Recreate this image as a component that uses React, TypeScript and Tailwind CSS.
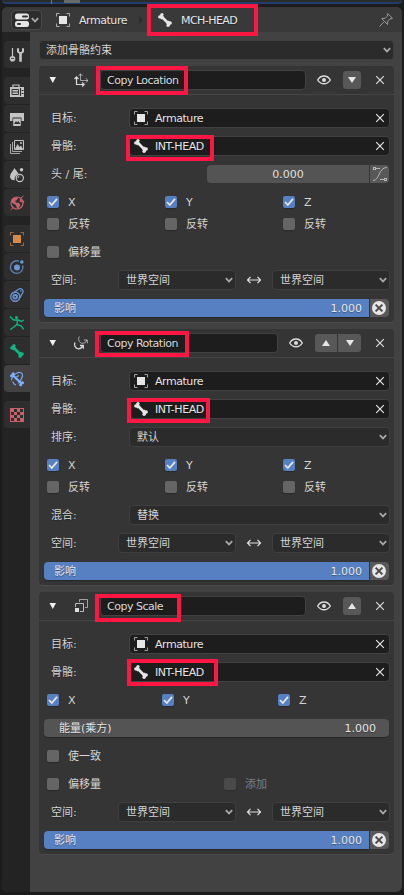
import { useState } from "react";
import type { ReactNode } from "react";
import clsx from "clsx";

const svgProps = {
  width: 16,
  height: 16,
  viewBox: "0 0 16 16",
  fill: "none",
  stroke: "currentColor",
  className: "shrink-0",
};

const ObjectIcon = () => (
  <svg {...svgProps}>
    <path d="M1.5 4.5v-3h3M11.5 1.5h3v3M14.5 11.5v3h-3M4.5 14.5h-3v-3" opacity="0.65" />
    <rect x="4" y="4" width="8" height="8" fill="currentColor" stroke="none" />
  </svg>
);

const BoneIcon = () => (
  <svg {...svgProps}>
    <path d="M4.5 4.5l7 7" strokeWidth="2.6" />
    <g fill="currentColor" stroke="none">
      <circle cx="5" cy="2.6" r="1.6" />
      <circle cx="2.8" cy="4.9" r="1.7" />
      <circle cx="13.2" cy="11" r="1.7" />
      <circle cx="11.1" cy="13.3" r="1.7" />
      <path d="M4 2l3 3-2.5 2.5L2 5zM12 14l-3-3 2.5-2.5L14 11z" />
    </g>
  </svg>
);

const ToolIcon = () => (
  <svg {...svgProps}>
    <path d="M3.5 1v8" strokeWidth="1.2" />
    <circle cx="3.5" cy="11.8" r="2.8" fill="currentColor" stroke="none" />
    <path d="M2 11.5h3" stroke="#2f2f2f" strokeWidth="0.8" />
    <path d="M9 1.3v3.2L11.5 6.5 14 4.5V1.3" strokeWidth="2" />
    <path d="M11.5 6v8.7" strokeWidth="2.6" />
  </svg>
);

const RenderIcon = () => (
  <svg {...svgProps}>
    <path d="M4 4V2h6v2" strokeWidth="1.2" />
    <path fill="currentColor" stroke="none" d="M1 4h14v10H1z" />
    <path d="M3 6.5h6.5v5H3zM3 9h6.5" stroke="#303030" />
    <path d="M11.5 5v8M12.5 7.5h2M12.5 10.500h2" stroke="#303030" />
  </svg>
);

const OutputIcon = () => (
  <svg {...svgProps}>
    <path fill="currentColor" stroke="none" d="M1 2h14v3H1zM1 5h14v5h-2.5V6.5h-9V10H1z" />
    <path fill="currentColor" stroke="none" d="M4.2 7.5h7.6V15H4.2z" />
    <path fill="#303030" stroke="none" d="M5 13l2-3 1.2 1.5L9.5 10l1.8 3z" />
  </svg>
);

const ViewLayerIcon = () => (
  <svg {...svgProps}>
    <path d="M1.5 5v9.5H11M3.5 3v9.5H13" opacity="0.8" />
    <path d="M5.5 1.5h9v9h-9z" />
    <path d="M6 10l2.500-5 2 3 1.500-1.500L14 10z" fill="currentColor" stroke="none" />
    <circle cx="12" cy="4" r="1" fill="currentColor" stroke="none" />
  </svg>
);

const SceneIcon = () => (
  <svg {...svgProps}>
    <path
      d="M5.5 1C4 4 1 6.5 1 9.5 1 12 3 13.5 5.500 13.300 5.500 10 7 7.500 9.500 7 8.500 4.500 6.500 3 5.500 1z"
      fill="currentColor"
      stroke="none"
    />
    <circle cx="12.5" cy="2.8" r="1.8" fill="currentColor" stroke="none" />
    <circle cx="10.8" cy="11" r="3.6" strokeWidth="1.2" />
    <path d="M9 11a2 2 0 0 1 1.5-2" />
  </svg>
);

const WorldIcon = () => (
  <svg {...svgProps}>
    <circle cx="8" cy="8" r="6" strokeWidth="1.2" />
    <path d="M12 3l2.5-2M4 13l-2.5 2M14 8.5l.8-3" />
    <path
      d="M3 4l4-2 2 1-1 2-2 1 1 1.5 3 .5 1.5 2-2 3-1.5.5L7 10 4 8.5 2.5 7zM11 3.5l2 2-.5 2-2-1z"
      fill="currentColor"
      stroke="none"
    />
  </svg>
);

const PhysicsIcon = () => (
  <svg {...svgProps}>
    <path d="M10 2.2A6.3 6.3 0 1 0 13.8 6.5" strokeWidth="1.3" opacity="0.8" />
    <circle cx="8" cy="8.5" r="3" fill="currentColor" stroke="none" />
    <circle cx="12.8" cy="3" r="1.8" fill="currentColor" stroke="none" />
  </svg>
);

const ConstraintIcon = () => (
  <svg {...svgProps}>
    <circle cx="6.2" cy="9.8" r="4.5" strokeWidth="1.4" />
    <circle cx="6.2" cy="9.8" r="1.8" strokeWidth="1.8" />
    <path d="M2.5 7L10 2c2-1 4.500.5 4 3.200L10.200 12" strokeWidth="1.3" />
    <circle cx="11.8" cy="4" r=".8" fill="currentColor" stroke="none" />
  </svg>
);

const ArmatureDataIcon = () => (
  <svg {...svgProps}>
    <circle cx="7.5" cy="2.5" r="1.5" fill="currentColor" stroke="none" />
    <path
      d="M1 1.5L4.5 5h5l3 1.5L14.8 5M8.5 5l-.5 4.5 4.5 1.5 2 3.5M7.8 9.5L5 12l-3.800 2.500"
      strokeWidth="1.4"
    />
  </svg>
);

const BoneConstraintIcon = () => (
  <svg {...svgProps}>
    <path
      d="M2.500 9.500c0-3 2-5.500 5.500-7.500 3-1.500 6 0 5.500 3-.5 2-2 5-4 7.500M4 10.500a4 4 0 0 0 3 3.500M6.500 6.500L10 4.500"
      strokeWidth="1.2"
      opacity="0.85"
    />
    <path d="M4 4.500l9 8.500" strokeWidth="2.2" />
    <g fill="currentColor" stroke="none">
      <circle cx="4.2" cy="2.8" r="1.5" />
      <circle cx="2.5" cy="4.8" r="1.5" />
      <circle cx="13.5" cy="11.8" r="1.5" />
      <circle cx="11.7" cy="13.8" r="1.5" />
    </g>
  </svg>
);

const TextureIcon = () => (
  <svg {...svgProps}>
    <rect x="1.5" y="1.5" width="13" height="13" />
    <path
      fill="currentColor"
      stroke="none"
      d="M2 2h3v3H2zM8 2h3v3H8zM5 5h3v3H5zM11 5h3v3h-3zM2 8h3v3H2zM8 8h3v3H8zM5 11h3v3H5zM11 11h3v3h-3z"
    />
  </svg>
);

const LocationIcon = () => (
  <svg {...svgProps}>
    <path d="M3.5 5v7.500H11M1.500 7l2-2.200 2 2.200M9 10.300l2.200 2.200L9 14.500" strokeWidth="1.2" />
    <path d="M7.500 2v6.500H15M5.500 4l2-2.300 2 2.300M12.700 6.300L15 8.500l-2.300 2.200" opacity="0.65" />
  </svg>
);

const RotationIcon = () => (
  <svg {...svgProps}>
    <path d="M2 7.500C.8 10 2 13 4.500 13.700c2.500.5 4.500-1 5.500-3.200M7 10.500h3.300v3.300" strokeWidth="1.3" />
    <path d="M6.300 1.500C4.800 4 6 7.200 8.500 8.200 11 8.700 13 7.500 14 5M10.800 5h3.500v3.300" opacity="0.7" />
  </svg>
);

const ScaleIcon = () => (
  <svg {...svgProps}>
    <path d="M6.500 4V1.500h8v8H12" opacity="0.65" />
    <path d="M2.500 9V5.500h8v8H7" opacity="0.8" />
    <rect x="2" y="10" width="4" height="4" fill="currentColor" stroke="none" />
  </svg>
);

const EyeIcon = () => (
  <svg {...svgProps}>
    <path
      d="M1.700 8C3.200 5.300 5.500 4 8 4s4.800 1.300 6.300 4C12.800 10.500 10.500 11.800 8 11.800S3.200 10.500 1.700 8z"
      strokeWidth="1.4"
    />
    <circle cx="8" cy="7.9" r="2" fill="currentColor" stroke="none" />
  </svg>
);

const CloseIcon = () => (
  <svg {...svgProps}>
    <path d="M4.200 4.200l7.600 7.600M11.800 4.200l-7.600 7.600" strokeWidth="1.2" />
  </svg>
);

const Chevron = () => (
  <svg width="8" height="6" viewBox="0 0 8 6" fill="none" stroke="#a8a8a8" className="shrink-0">
    <path d="M.8 1.200L4 4.400l3.200-3.200" strokeWidth="1.8" />
  </svg>
);

const Triangle = ({ up = false }: { up?: boolean }) => (
  <svg width="8" height="8" viewBox="0 0 8 8" fill="#e6e6e6" className="shrink-0">
    <path d={up ? "M4 1l4 6H0z" : "M0 1h8L4 7z"} />
  </svg>
);

const SwapIcon = () => (
  <svg {...svgProps}>
    <path d="M1.500 8h13M4.500 4.800L1.500 8l3 3.200M11.500 4.800l3 3.200-3 3.200" strokeWidth="1.2" />
  </svg>
);

const PinIcon = () => (
  <svg {...svgProps}>
    <path d="M9.700 1.500l4.800 4.800-1.500.7-1-.3L9.800 9l-.3 3.500L3.700 6.500 7.200 6.200 9.500 4l-.3-1.200zM6.300 9.500L1.500 14.500" />
  </svg>
);

const CurveIcon = () => (
  <svg {...svgProps}>
    <path d="M1 14.500c7 0 5-13 14-13M4 2.500h4M8 13.500h4" />
    <rect x="1.5" y="1.5" width="2" height="2" />
    <rect x="12.5" y="12.5" width="2" height="2" />
  </svg>
);

const EditorIcon = () => (
  <svg {...svgProps} className="shrink-0 text-[#e6e6e6]">
    <rect x="1" y="1.500" width="14" height="6" rx="2.5" fill="currentColor" stroke="none" />
    <rect x="1" y="9" width="14" height="6" rx="2.5" fill="currentColor" stroke="none" />
    <path d="M9 4.500h4M4 12h2" stroke="#333" strokeWidth="2" strokeLinecap="round" />
  </svg>
);

const tabGroups = [
  [{ id: "tool", icon: <ToolIcon />, color: "text-[#c4c4c4]" }],
  [
    { id: "render", icon: <RenderIcon />, color: "text-[#c4c4c4]" },
    { id: "output", icon: <OutputIcon />, color: "text-[#c4c4c4]" },
    { id: "viewLayer", icon: <ViewLayerIcon />, color: "text-[#c4c4c4]" },
    { id: "scene", icon: <SceneIcon />, color: "text-[#c4c4c4]" },
    { id: "world", icon: <WorldIcon />, color: "text-[#c7616b]" },
  ],
  [
    { id: "object", icon: <ObjectIcon />, color: "text-[#d58a4b]" },
    { id: "physics", icon: <PhysicsIcon />, color: "text-[#6b96d6]" },
    { id: "constraint", icon: <ConstraintIcon />, color: "text-[#6b96d6]" },
    { id: "data", icon: <ArmatureDataIcon />, color: "text-[#10b582]" },
    { id: "bone", icon: <BoneIcon />, color: "text-[#10b582]" },
    { id: "boneConstraint", icon: <BoneConstraintIcon />, color: "text-[#82b3ff]" },
  ],
  [{ id: "texture", icon: <TextureIcon />, color: "text-[#c7616b]" }],
];

// Red callout frames drawn over the editor
const callouts = [
  "left-[147px] top-[4px] w-[111px] h-[32px]",
  "left-[96px] top-[66px] w-[92px] h-[29px]",
  "left-[126px] top-[135px] w-[88px] h-[26px]",
  "left-[95px] top-[331px] w-[94px] h-[26px]",
  "left-[127px] top-[398px] w-[83px] h-[25px]",
  "left-[95px] top-[594px] w-[86px] h-[28px]",
  "left-[127px] top-[659px] w-[91px] h-[27px]",
];

function Text({ className, children }: { className?: string; children: ReactNode }) {
  return <span className={clsx("pt-[2px]", className)}>{children}</span>;
}

function Row({ label, children }: { label?: string; children: ReactNode }) {
  return (
    <div className="flex h-5 items-center">
      {label && <Text className="w-[79px] shrink-0 pl-2">{label}</Text>}
      {children}
    </div>
  );
}

function Select({ value, className }: { value: string; className?: string }) {
  return (
    <button
      className={clsx(
        "flex h-5 items-center justify-between rounded-[4px] border border-[#3f3f3f] bg-[#2b2b2b] pr-[2px]",
        className
      )}
    >
      <Text>{value}</Text>
      <Chevron />
    </button>
  );
}

function DataField({ icon, value }: { icon: ReactNode; value: string }) {
  return (
    <div className="ml-[7px] flex h-5 flex-1 items-center rounded-[4px] border border-[#424242] bg-[#1d1d1d] pr-[1px] pl-[3px] text-[#e6e6e6]">
      {icon}
      <Text className="ml-[6px] flex-1 tracking-[-0.45px]">{value}</Text>
      <CloseIcon />
    </div>
  );
}

function Checkbox({
  label,
  defaultChecked = false,
  disabled = false,
  className,
}: {
  label: string;
  defaultChecked?: boolean;
  disabled?: boolean;
  className?: string;
}) {
  const [checked, setChecked] = useState(defaultChecked);
  return (
    <button
      onClick={() => !disabled && setChecked(!checked)}
      className={clsx("flex items-center gap-[9px]", disabled && "opacity-45", className)}
    >
      <span
        className={clsx(
          "flex h-3 w-3 items-center justify-center rounded-[2px] shadow-[0_1px_1px_rgba(0,0,0,0.25)]",
          checked ? "bg-[#5680c2]" : "bg-[#656565]"
        )}
      >
        {checked && (
          <svg width="10" height="10" viewBox="0 0 10 10" fill="none" stroke="#e6e6e6">
            <path d="M1 5l2.800 3L9 1.800" strokeWidth="1.8" />
          </svg>
        )}
      </span>
      <Text>{label}</Text>
    </button>
  );
}

function Axes({ compact = false }: { compact?: boolean }) {
  return (
    <div className="flex h-5 items-center pl-[4px]">
      <Checkbox label="X" defaultChecked className={compact ? "w-[115px]" : "w-[118px]"} />
      <Checkbox label="Y" defaultChecked className={compact ? "w-[116px]" : "w-[118px]"} />
      <Checkbox label="Z" defaultChecked />
    </div>
  );
}

function InvertRow() {
  return (
    <div className="-mt-[6px] flex h-5 items-center pl-[4px]">
      <Checkbox label="反转" className="w-[118px]" />
      <Checkbox label="反转" className="w-[118px]" />
      <Checkbox label="反转" />
    </div>
  );
}

function SpaceRow() {
  return (
    <div className="flex h-5 items-center">
      <Text className="w-[75px] pl-2">空间:</Text>
      <Select value="世界空间" className="w-[118px] pl-[7px]" />
      <span className="flex w-[36px] justify-center text-[#e0e0e0]">
        <SwapIcon />
      </span>
      <Select value="世界空间" className="flex-1 pl-[7px]" />
    </div>
  );
}

function Influence() {
  return (
    <div className="flex h-5 items-center gap-px pr-[1px] pl-[1px]">
      <div className="flex h-[18px] flex-1 items-center justify-between rounded-l-[4px] bg-[#5680c2] pr-[7px] pl-[10px] text-[#e6e6e6] shadow-[0_1px_1px_rgba(0,0,0,0.3)]">
        <Text>影响</Text>
        <Text>1.000</Text>
      </div>
      <button className="flex h-[18px] w-[19px] items-center justify-start rounded-r-[4px] bg-[#585858] pl-[2px]">
        <svg width="14" height="14" viewBox="0 0 14 14">
          <circle cx="7" cy="7" r="7" fill="#e6e6e6" />
          <path d="M3.600 3.600l6.800 6.800M10.400 3.600l-6.800 6.800" stroke="#4a4a4a" strokeWidth="2" />
        </svg>
      </button>
    </div>
  );
}

function Panel({
  icon,
  title,
  up = false,
  down = false,
  children,
}: {
  icon: ReactNode;
  title: string;
  up?: boolean;
  down?: boolean;
  children: ReactNode;
}) {
  const [open, setOpen] = useState(true);
  return (
    <section className="rounded-[4px] bg-[#353535] pb-[4px] shadow-[0_1px_0_#4a4a4a]">
      <div className="flex h-[29px] items-center border-b border-[#454545] pr-[6px] text-[#dcdcdc]">
        <button onClick={() => setOpen(!open)} className="ml-[9px]">
          <svg width="9" height="8" viewBox="0 0 9 8" fill="#f0f0f0">
            <path d="M1.500 1h6.500L4.750 7z" />
          </svg>
        </button>
        <span className="ml-[16px]">{icon}</span>
        <div className="ml-[11px] flex h-5 flex-1 items-center rounded-[4px] border border-[#424242] bg-[#1d1d1d] pl-[6px] tracking-[-0.5px]">
          <Text>{title}</Text>
        </div>
        <button className="ml-[10px]">
          <EyeIcon />
        </button>
        <div className="mr-[11px] ml-[11px] flex gap-px overflow-hidden rounded-[3px]">
          {up && (
            <button
              className={clsx("flex h-[18px] items-center justify-center bg-[#585858]", down ? "w-[22px]" : "w-[18px]")}
            >
              <Triangle up />
            </button>
          )}
          {down && (
            <button
              className={clsx("flex h-[18px] items-center justify-center bg-[#585858]", up ? "w-[23px]" : "w-[18px]")}
            >
              <Triangle />
            </button>
          )}
        </div>
        <button>
          <CloseIcon />
        </button>
      </div>
      {open && <div className="flex flex-col gap-2 px-[4px] pt-[13px]">{children}</div>}
    </section>
  );
}

export default function App() {
  const [activeTab, setActiveTab] = useState("boneConstraint");

  return (
    <div className="relative flex h-[895px] w-[404px] flex-col overflow-hidden bg-[#1c1c1c] font-['DejaVu_Sans','Noto_Sans_CJK_SC',sans-serif] text-[11px] leading-[14px] text-[#d4d4d4] [text-shadow:0_1px_1px_rgba(0,0,0,0.35)]">
      {/* Bottom edge of the editor above */}
      <div className="mx-[2px] mb-[3px] flex h-[4px] shrink-0 gap-3 rounded-b-[4px] border-b-2 border-[#213d6b] bg-[#2b2b2b] pl-[49px]">
        <span className="h-[4px] w-px bg-[#777]" />
        <span className="h-[3px] w-[16px] bg-[#6a6a6a]" />
      </div>

      <div className="mx-[2px] mb-[3px] flex flex-1 flex-col overflow-hidden rounded-[6px] bg-[#424242]">
        <header className="flex h-[25px] shrink-0 items-center bg-[#393939] pr-[8px] pl-[9px] text-[#e6e6e6]">
          <button className="flex h-[20px] w-[31px] items-center gap-[1px] rounded-[4px] border border-[#4a4a4a] bg-[#2d2d2d] pl-[2px]">
            <EditorIcon />
            <Chevron />
          </button>
          <span className="ml-[13px]">
            <ObjectIcon />
          </span>
          <Text className="ml-[8px] w-[60px] tracking-[-0.45px]">Armature</Text>
          <svg width="5" height="8" viewBox="0 0 5 8" fill="#2c2c2c">
            <path d="M0 0l4 4-4 4z" />
          </svg>
          <span className="ml-[13px]">
            <BoneIcon />
          </span>
          <Text className="ml-[8px] flex-1 tracking-[-0.55px]">MCH-HEAD</Text>
          <span className="text-[#9a9a9a]">
            <PinIcon />
          </span>
        </header>

        <div className="flex flex-1">
          <nav className="flex w-7 shrink-0 flex-col gap-[9px] bg-[#232323] pt-[9px] pl-[2px]">
            {tabGroups.map((group, i) => (
              <div key={i} className="flex flex-col gap-px">
                {group.map((tab) => (
                  <button
                    key={tab.id}
                    onClick={() => setActiveTab(tab.id)}
                    className={clsx(
                      "flex h-[27px] items-center rounded-l-[4px] pl-[5px]",
                      tab.color,
                      activeTab === tab.id ? "bg-[#424242]" : "bg-[#2e2e2e]"
                    )}
                  >
                    {tab.icon}
                  </button>
                ))}
              </div>
            ))}
          </nav>

          <main className="flex flex-1 flex-col gap-[7px] pt-[8px] pr-[8px] pl-[9px]">
            <Select value="添加骨骼约束" className="-mb-[1px] w-full shrink-0 pl-[6px]" />

            <Panel icon={<LocationIcon />} title="Copy Location" down>
              <Row label="目标:">
                <DataField icon={<ObjectIcon />} value="Armature" />
              </Row>
              <Row label="骨骼:">
                <DataField icon={<BoneIcon />} value="INT-HEAD" />
              </Row>
              <Row label="头 / 尾:">
                <div className="mr-px ml-[85px] flex h-[18px] flex-1 gap-px">
                  <div className="flex flex-1 items-center justify-center rounded-l-[4px] bg-[#545454] text-[#e6e6e6]">
                    <Text>0.000</Text>
                  </div>
                  <button className="flex w-[19px] items-center justify-center rounded-r-[4px] bg-[#585858] text-[#b4b4b4]">
                    <CurveIcon />
                  </button>
                </div>
              </Row>
              <Axes />
              <InvertRow />
              <Row>
                <Checkbox label="偏移量" className="ml-[4px]" />
              </Row>
              <SpaceRow />
              <Influence />
            </Panel>

            <Panel icon={<RotationIcon />} title="Copy Rotation" up down>
              <Row label="目标:">
                <DataField icon={<ObjectIcon />} value="Armature" />
              </Row>
              <Row label="骨骼:">
                <DataField icon={<BoneIcon />} value="INT-HEAD" />
              </Row>
              <Row label="排序:">
                <Select value="默认" className="ml-[7px] flex-1 pl-[7px]" />
              </Row>
              <Axes />
              <InvertRow />
              <Row label="混合:">
                <Select value="替换" className="ml-[7px] flex-1 pl-[7px]" />
              </Row>
              <SpaceRow />
              <Influence />
            </Panel>

            <Panel icon={<ScaleIcon />} title="Copy Scale" up>
              <Row label="目标:">
                <DataField icon={<ObjectIcon />} value="Armature" />
              </Row>
              <Row label="骨骼:">
                <DataField icon={<BoneIcon />} value="INT-HEAD" />
              </Row>
              <Axes compact />
              <Row>
                <div className="mx-px flex h-[18px] flex-1 items-center justify-between rounded-[4px] bg-[#545454] pr-[13px] pl-[15px] text-[#e6e6e6] shadow-[0_1px_1px_rgba(0,0,0,0.3)]">
                  <Text>能量(乘方)</Text>
                  <Text>1.000</Text>
                </div>
              </Row>
              <Row>
                <Checkbox label="使一致" className="ml-[4px]" />
              </Row>
              <Row>
                <Checkbox label="偏移量" className="ml-[4px] w-[177px]" />
                <Checkbox label="添加" disabled />
              </Row>
              <SpaceRow />
              <Influence />
            </Panel>
          </main>
        </div>
      </div>

      {callouts.map((box) => (
        <div key={box} className={clsx("pointer-events-none absolute border-4 border-[#ff1744]", box)} />
      ))}
    </div>
  );
}
